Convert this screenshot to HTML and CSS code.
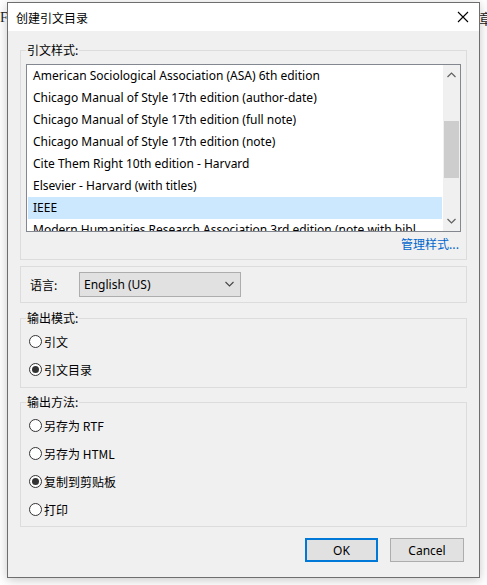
FILE: index.html
```html
<!DOCTYPE html>
<html lang="zh-CN">
<head>
<meta charset="utf-8">
<title>创建引文目录</title>
<link rel="stylesheet" href="styles.css">
</head>
<body>
<div class="desktop">
  <div class="bg-text bg-left">F</div>
  <div class="bg-text bg-right">章</div>
  <div class="dialog">
    <div class="titlebar">
      <span class="title">创建引文目录</span>
      <svg class="close" width="12" height="12" viewBox="0 0 12 12"><path d="M1 1 L11 11 M11 1 L1 11" stroke="#000" stroke-width="1.1" fill="none"/></svg>
    </div>
    <div class="body">
      <fieldset class="group group-style">
        <legend>引文样式:</legend>
        <div class="listbox">
          <div class="items">
            <div class="item">American Sociological Association (ASA) 6th edition</div>
            <div class="item">Chicago Manual of Style 17th edition (author-date)</div>
            <div class="item">Chicago Manual of Style 17th edition (full note)</div>
            <div class="item">Chicago Manual of Style 17th edition (note)</div>
            <div class="item">Cite Them Right 10th edition - Harvard</div>
            <div class="item">Elsevier - Harvard (with titles)</div>
            <div class="item selected">IEEE</div>
            <div class="item">Modern Humanities Research Association 3rd edition (note with bibl</div>
          </div>
          <div class="scrollbar">
            <svg class="arrow" width="9" height="6" viewBox="0 0 9 6"><path d="M0.5 5 L4.5 1 L8.5 5" stroke="#606060" stroke-width="1.2" fill="none"/></svg>
            <div class="track"><div class="thumb"></div></div>
            <svg class="arrow" width="9" height="6" viewBox="0 0 9 6"><path d="M0.5 1 L4.5 5 L8.5 1" stroke="#606060" stroke-width="1.2" fill="none"/></svg>
          </div>
        </div>
        <div class="manage"><span class="link">管理样式...</span></div>
      </fieldset>

      <div class="group group-lang">
        <span class="lang-label">语言:</span>
        <div class="select">
          <span>English (US)</span>
          <svg width="9" height="6" viewBox="0 0 9 6"><path d="M0.5 1 L4.5 5 L8.5 1" stroke="#444" stroke-width="1.1" fill="none"/></svg>
        </div>
      </div>

      <fieldset class="group group-radio group-mode">
        <legend>输出模式:</legend>
        <label class="radio"><span class="circle"></span>引文</label>
        <label class="radio"><span class="circle checked"></span>引文目录</label>
      </fieldset>

      <fieldset class="group group-radio group-method">
        <legend>输出方法:</legend>
        <label class="radio"><span class="circle"></span>另存为 RTF</label>
        <label class="radio"><span class="circle"></span>另存为 HTML</label>
        <label class="radio"><span class="circle checked"></span>复制到剪贴板</label>
        <label class="radio"><span class="circle"></span>打印</label>
      </fieldset>

      <div class="buttons">
        <button class="btn btn-default">OK</button>
        <button class="btn">Cancel</button>
      </div>
    </div>
  </div>
</div>
</body>
</html>
```

FILE: styles.css
```css
* { box-sizing: border-box; }
html, body { margin: 0; padding: 0; background: #fff; }
body {
  font-family: "Noto Sans", "Noto Sans CJK SC", sans-serif;
  font-size: 12px;
  color: #000;
  width: 487px;
  height: 585px;
  overflow: hidden;
}
.desktop {
  position: relative;
  width: 487px;
  height: 585px;
  padding-top: 2px;
  padding-left: 7px;
}
.bg-text {
  position: absolute;
  font-family: "Liberation Serif", "Noto Sans CJK SC", serif;
  font-size: 14px;
  color: #222;
}
.bg-left { left: 0; top: 10px; }
.bg-right { left: 479px; top: 8px; }

.dialog {
  position: relative;
  width: 473px;
  height: 576px;
  border: 1px solid #6e6e6e;
  background: #f0f0f0;
  box-shadow: 0 2px 10px rgba(0,0,0,0.22);
  display: flex;
  flex-direction: column;
}
.titlebar {
  height: 28px;
  background: #fff;
  display: flex;
  align-items: center;
  justify-content: space-between;
  padding: 0 10px 0 8px;
}
.title {
  font-family: "Noto Sans CJK SC", sans-serif;
  font-size: 12px;
  margin-top: 1px;
}

.body {
  flex: 1;
  padding: 11px 12px 0 12px;
  display: flex;
  flex-direction: column;
}
.group {
  border: 1px solid #dcdcdc;
  margin: 0;
  min-width: 0;
}
legend {
  font-family: "Noto Sans CJK SC", sans-serif;
  font-size: 12px;
  line-height: 16px;
  padding: 0 1px;
  margin-left: 0;
}
.group-style { padding: 6px 5px 6px 5px; }
.listbox {
  height: 168px;
  border: 1px solid #828790;
  background: #fff;
  display: flex;
  overflow: hidden;
}
.items {
  flex: 1;
  min-width: 0;
  overflow: hidden;
  padding: 0 1px;
}
.item {
  height: 22px;
  line-height: 22px;
  padding-left: 5px;
  white-space: nowrap;
  overflow: hidden;
}
.item.selected { background: #cce8ff; }
.scrollbar {
  width: 17px;
  background: #f0f0f0;
  display: flex;
  flex-direction: column;
  align-items: center;
}
.arrow { margin: 7px 0; flex: none; }
.track { flex: 1; width: 100%; position: relative; }
.thumb {
  position: absolute;
  left: 1px; right: 1px;
  top: 36px;
  height: 57px;
  background: #cdcdcd;
}
.manage {
  text-align: right;
  margin-top: 4px;
  line-height: 16px;
  padding-right: 2px;
}
.link {
  color: #0066cc;
  font-family: "Noto Sans CJK SC", sans-serif;
}

.group-lang {
  margin-top: 6px;
  height: 37px;
  display: flex;
  align-items: center;
  padding-left: 9px;
}
.lang-label {
  font-family: "Noto Sans CJK SC", sans-serif;
  width: 49px;
}
.select {
  width: 162px;
  height: 25px;
  margin-top: -1px;
  background: #e1e1e1;
  border: 1px solid #adadad;
  display: flex;
  align-items: center;
  justify-content: space-between;
  padding: 0 6px 0 4px;
}

.group-mode { margin-top: 7px; padding: 1px 5px 4px 5px; }
.group-method { margin-top: 6px; padding: 1px 5px 3px 5px; }
.radio {
  display: flex;
  align-items: center;
  height: 28px;
  margin-left: 3px;
  font-family: "Noto Sans CJK SC", sans-serif;
}
.circle {
  width: 13px;
  height: 13px;
  border: 1px solid #333;
  border-radius: 50%;
  background: #fff;
  margin-right: 2px;
  display: flex;
  align-items: center;
  justify-content: center;
}
.circle.checked::after {
  content: "";
  width: 7px;
  height: 7px;
  border-radius: 50%;
  background: #333;
}

.buttons {
  display: flex;
  justify-content: flex-end;
  gap: 12px;
  margin-top: 11px;
  margin-right: 3px;
}
.btn {
  font-family: "Noto Sans", sans-serif;
  font-size: 12px;
  width: 74px;
  height: 24px;
  background: #e1e1e1;
  border: 1px solid #adadad;
  padding: 0;
  color: #000;
}
.btn-default { border: 2px solid #0078d7; width: 73px; }
```
